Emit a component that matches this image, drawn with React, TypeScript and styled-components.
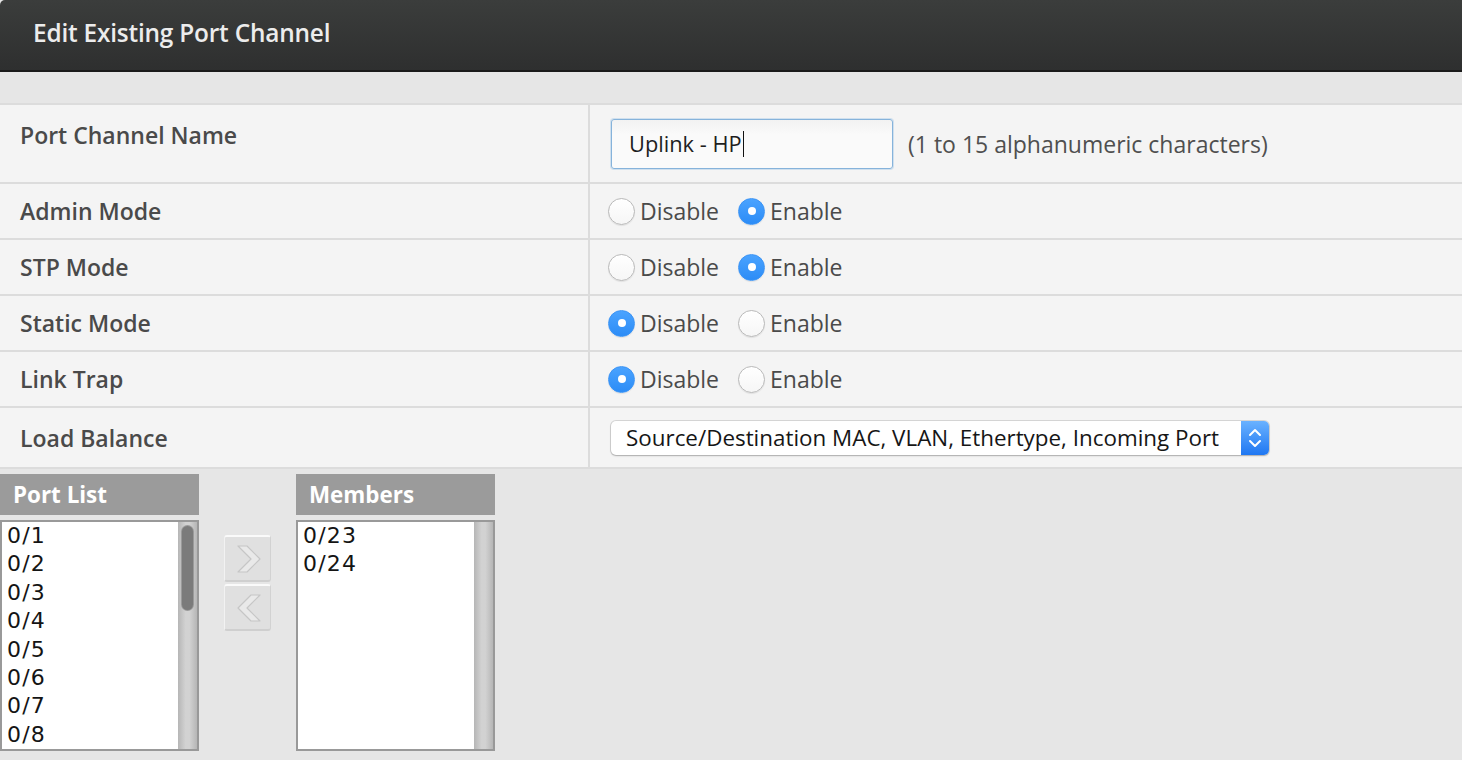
import React from "react";
import styled, { createGlobalStyle } from "styled-components";

const GlobalStyle = createGlobalStyle`
  html, body {
    margin: 0;
    padding: 0;
    background: #e6e6e6;
  }
  body {
    font-family: "Open Sans", "Liberation Sans", sans-serif;
  }
`;

const Page = styled.div`
  width: 1462px;
  min-height: 760px;
  background: #e6e6e6;
`;

const Header = styled.div`
  height: 70px;
  box-sizing: border-box;
  display: flex;
  align-items: center;
  padding: 0 0 6px 33px;
  background: linear-gradient(#3b3d3c, #2e2f2f);
  border-bottom: 2px solid #1b1b1b;
  border-top-left-radius: 5px;
  color: #ececec;
  font-size: 24.4px;
  font-weight: 600;
  letter-spacing: -0.2px;
  height: 72px;
`;

const Band = styled.div`
  height: 31px;
  background: #e6e6e6;
`;

const Table = styled.div`
  background: #f4f4f4;
  border-top: 2px solid #dcdcdc;
`;

const Row = styled.div<{ $h: number }>`
  display: grid;
  grid-template-columns: 590px 1fr;
  height: ${(p) => p.$h}px;
  border-bottom: 2px solid #dcdcdc;
`;

const Label = styled.div<{ $top?: boolean }>`
  height: 100%;
  display: flex;
  align-items: ${(p) => (p.$top ? "flex-start" : "center")};
  padding: ${(p) => (p.$top ? "14px 0 0 20px" : "0 0 0 20px")};
  box-sizing: border-box;
  border-right: 2px solid #dcdcdc;
  color: #4a4a4a;
  font-size: 23px;
  font-weight: 600;
`;

const Cell = styled.div`
  height: 100%;
  display: flex;
  align-items: center;
  padding-left: 18px;
  box-sizing: border-box;
`;

const TextBox = styled.div`
  width: 282px;
  height: 50px;
  box-sizing: border-box;
  display: flex;
  align-items: center;
  padding-left: 17px;
  background: linear-gradient(#f2f2f2, #fafafa 30%);
  border: 1px solid #86b3db;
  border-radius: 3px;
  box-shadow: 0 0 0 1px rgba(140, 185, 225, 0.35);
  color: #1e1e1e;
  font-size: 21.8px;
  margin-left: 3px;
`;

const Caret = styled.span`
  display: inline-block;
  width: 1px;
  height: 26px;
  background: #111;
  margin-left: 1px;
`;

const Hint = styled.span`
  margin-left: 15px;
  color: #4f4f4f;
  font-size: 23px;
`;

const RadioGroup = styled.div`
  display: flex;
  align-items: center;
  gap: 19px;
`;

const RadioOption = styled.label`
  display: flex;
  align-items: center;
  gap: 5px;
  color: #4a4a4a;
  font-size: 23px;
`;

const RadioCircle = styled.span<{ $on: boolean }>`
  width: 27px;
  height: 27px;
  box-sizing: border-box;
  border-radius: 50%;
  display: flex;
  align-items: center;
  justify-content: center;
  background: ${(p) =>
    p.$on ? "linear-gradient(#4aa3ff, #2c8cf6)" : "linear-gradient(#ffffff, #f6f6f6)"};
  border: 1px solid ${(p) => (p.$on ? "#3a93f5" : "#b9b9b9")};
  box-shadow: 0 1px 1px rgba(0, 0, 0, 0.08);
  &::after {
    content: "";
    display: ${(p) => (p.$on ? "block" : "none")};
    width: 8px;
    height: 8px;
    border-radius: 50%;
    background: #fff;
  }
`;

const Select = styled.div`
  width: 658px;
  height: 34px;
  margin-left: 3px;
  display: flex;
  align-items: stretch;
  background: #fff;
  border-radius: 5px;
  box-shadow: 0 0 0 1px rgba(0, 0, 0, 0.12), 0 1px 2px rgba(0, 0, 0, 0.2);
  overflow: hidden;
`;

const SelectText = styled.div`
  flex: 1;
  display: flex;
  align-items: center;
  padding-left: 15px;
  color: #161616;
  font-size: 22.4px;
`;

const Stepper = styled.div`
  width: 28px;
  display: flex;
  align-items: center;
  justify-content: center;
  background: linear-gradient(#6ab2ff, #1f77f2);
`;

const Lists = styled.div`
  display: flex;
  align-items: flex-start;
  padding-top: 5px;
`;

const ListColumn = styled.div`
  width: 199px;
  display: flex;
  flex-direction: column;
  gap: 5px;
`;

const ListHeader = styled.div`
  height: 41px;
  display: flex;
  align-items: center;
  padding-left: 13px;
  background: #9b9b9b;
  color: #fff;
  font-size: 22.4px;
  font-weight: 700;
`;

const ListBox = styled.div`
  height: 231px;
  box-sizing: border-box;
  border: 2px solid #999;
  background: #fff;
  display: flex;
`;

const Items = styled.div`
  flex: 1;
  padding: 0 0 0 5px;
  font-family: "DejaVu Sans", "Liberation Sans", sans-serif;
  font-size: 22px;
  letter-spacing: 1.2px;
  color: #141414;
  line-height: 28.4px;
  overflow: hidden;
`;

const Track = styled.div`
  width: 19px;
  background: linear-gradient(90deg, #b6b6b6, #d2d2d2 40%, #d2d2d2 60%, #b6b6b6);
  padding: 4px 4px 0;
  box-sizing: border-box;
`;

const Thumb = styled.div`
  height: 84px;
  border-radius: 6px;
  background: #7b7b7b;
  box-shadow: 0 0 0 1px #9a9a9a;
`;

const Mover = styled.div`
  width: 97px;
  display: flex;
  flex-direction: column;
  align-items: center;
  gap: 2px;
  padding-top: 61px;
`;

const MoveButton = styled.div`
  width: 47px;
  height: 47px;
  box-sizing: border-box;
  display: flex;
  align-items: center;
  justify-content: center;
  background: #e0e0e0;
  border-radius: 3px;
  border-top: 2px solid #fafafa;
  border-left: 1px solid #f2f2f2;
  border-bottom: 2px solid #cfcfcf;
  border-right: 1px solid #d2d2d2;
`;

const ports = ["0/1", "0/2", "0/3", "0/4", "0/5", "0/6", "0/7", "0/8"];
const members = ["0/23", "0/24"];

function Radio({ on, children }: { on: boolean; children: React.ReactNode }) {
  return (
    <RadioOption>
      <RadioCircle $on={on} />
      {children}
    </RadioOption>
  );
}

function Toggle({ enabled }: { enabled: boolean }) {
  return (
    <RadioGroup>
      <Radio on={!enabled}>Disable</Radio>
      <Radio on={enabled}>Enable</Radio>
    </RadioGroup>
  );
}

function Chevron({ dir }: { dir: "right" | "left" }) {
  const pts =
    dir === "right"
      ? "8,5 17,5 30,18 17,31 8,31 21,18"
      : "30,5 21,5 8,18 21,31 30,31 17,18";
  return (
    <svg width="36" height="36" viewBox="0 0 36 36">
      <polygon points={pts} fill="#e9e9e9" stroke="#c6c6c6" strokeWidth="1.2" strokeLinejoin="round" />
    </svg>
  );
}

export default function App() {
  const rows: { label: string; enabled: boolean }[] = [
    { label: "Admin Mode", enabled: true },
    { label: "STP Mode", enabled: true },
    { label: "Static Mode", enabled: false },
    { label: "Link Trap", enabled: false },
  ];

  return (
    <Page>
      <GlobalStyle />
      <Header>Edit Existing Port Channel</Header>
      <Band />
      <Table>
        <Row $h={77}>
          <Label $top>Port Channel Name</Label>
          <Cell>
            <TextBox>
              Uplink - HP
              <Caret />
            </TextBox>
            <Hint>(1 to 15 alphanumeric characters)</Hint>
          </Cell>
        </Row>
        {rows.map((r) => (
          <Row key={r.label} $h={54}>
            <Label>{r.label}</Label>
            <Cell>
              <Toggle enabled={r.enabled} />
            </Cell>
          </Row>
        ))}
        <Row $h={59}>
          <Label>Load Balance</Label>
          <Cell>
            <Select>
              <SelectText>Source/Destination MAC, VLAN, Ethertype, Incoming Port</SelectText>
              <Stepper>
                <svg width="14" height="24" viewBox="0 0 14 24">
                  <path d="M2 9 L7 4 L12 9 M2 15 L7 20 L12 15" fill="none" stroke="#fff" strokeWidth="2" strokeLinecap="round" strokeLinejoin="round" />
                </svg>
              </Stepper>
            </Select>
          </Cell>
        </Row>
      </Table>
      <Lists>
        <ListColumn>
          <ListHeader>Port List</ListHeader>
          <ListBox>
            <Items>
              {ports.map((p) => (
                <div key={p}>{p}</div>
              ))}
            </Items>
            <Track>
              <Thumb />
            </Track>
          </ListBox>
        </ListColumn>
        <Mover>
          <MoveButton>
            <Chevron dir="right" />
          </MoveButton>
          <MoveButton>
            <Chevron dir="left" />
          </MoveButton>
        </Mover>
        <ListColumn>
          <ListHeader>Members</ListHeader>
          <ListBox>
            <Items>
              {members.map((p) => (
                <div key={p}>{p}</div>
              ))}
            </Items>
            <Track />
          </ListBox>
        </ListColumn>
      </Lists>
    </Page>
  );
}
